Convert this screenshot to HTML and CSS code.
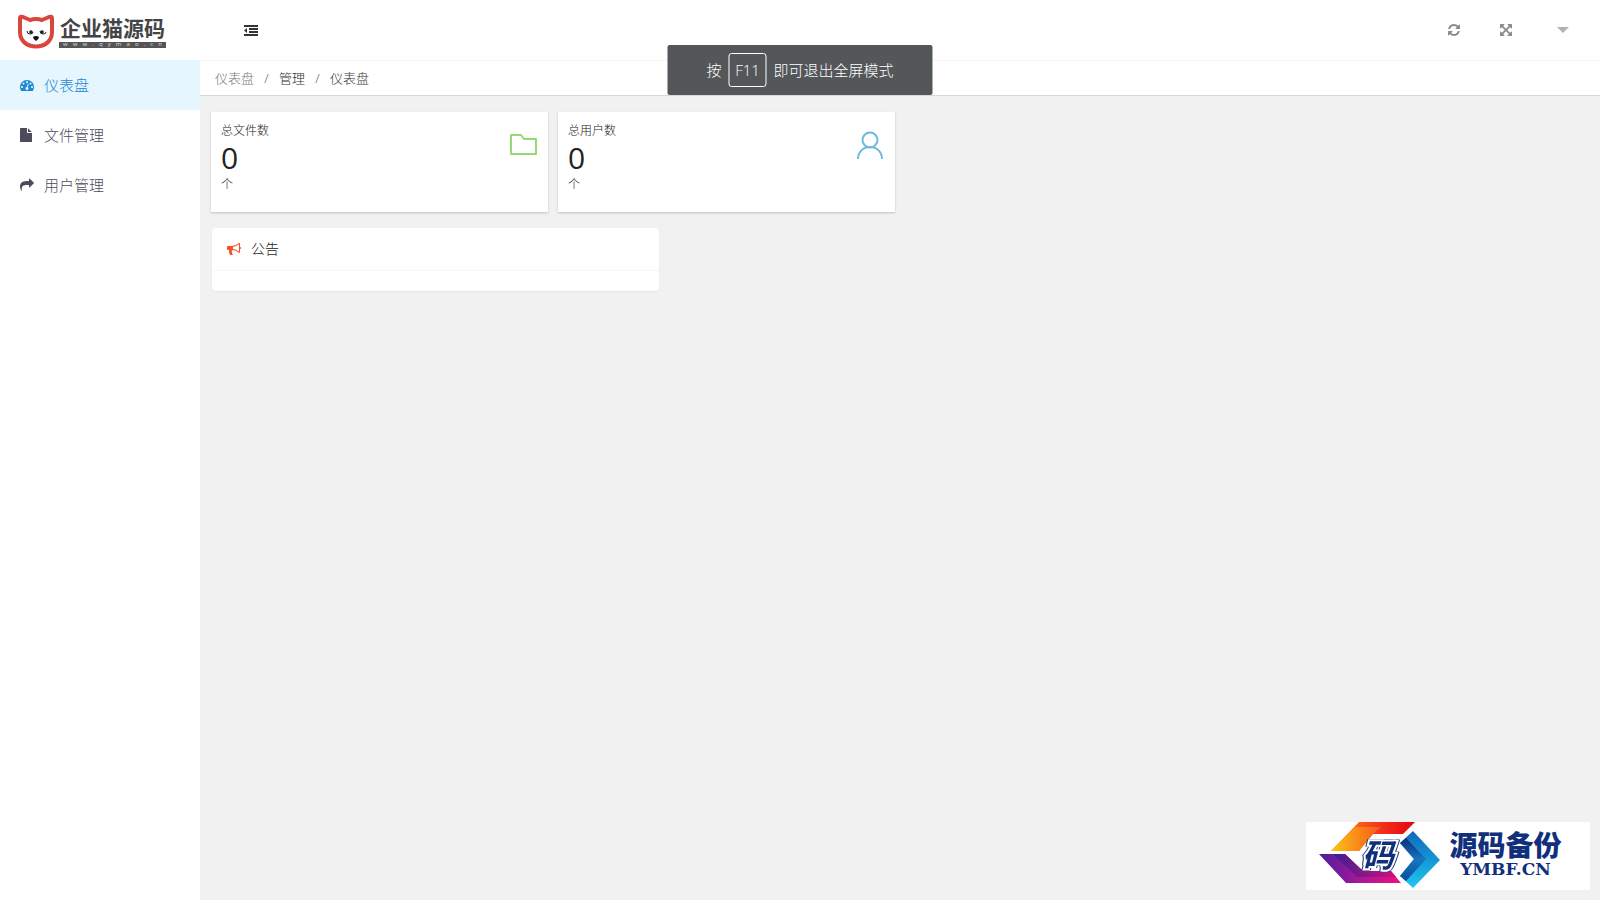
FILE: index.html
```html
<!DOCTYPE html>
<html lang="zh-CN">
<head>
    <meta charset="UTF-8">
    <title>仪表盘</title>
    <link rel="stylesheet" href="styles.css">
</head>
<body>
<header class="header">
    <a class="logo" href="#">
        <svg class="logo-cat" viewBox="0 0 38 36">
            <path d="M3 4Q3 2 6 3L13 6Q19 4 25 6L32 3Q35 2 35 4V18C35 27 28 32.500 19 32.500S3 27 3 18Z" fill="#fff" stroke="#d9463c" stroke-width="4" stroke-linejoin="round"/>
            <path d="M10 17q0 3 3 3t3-2M23 17q0 3 3 3t3-2" fill="none" stroke="#222" stroke-width="1"/>
            <circle cx="14" cy="18" r="1.800" fill="#222"/>
            <circle cx="25" cy="18" r="1.800" fill="#222"/>
            <path d="M16 23q3-2 6 0q0 2-3 4q-3-2-3-4z" fill="#111"/>
        </svg>
        <span class="logo-name">
            <b>企业猫源码</b>
            <small>w w w . q y m a o . c n</small>
        </span>
    </a>
    <button class="icon-btn fold" aria-label="收起菜单">
        <svg class="icon" viewBox="0 0 14 14"><path d="M0 2h14v2H0zM5 5h9v2H5zM5 8h9v2H5zM0 11h14v2H0zM3 5v5L0 7.500z"/></svg>
    </button>
    <div class="tools">
        <button class="icon-btn" aria-label="刷新">
            <svg class="icon" viewBox="0 0 1792 1792"><path d="M1639 1056q0 5-1 7-64 268-268 434.500t-478 166.500q-146 0-282.500-55t-243.500-157l-129 129q-19 19-45 19t-45-19-19-45v-448q0-26 19-45t45-19h448q26 0 45 19t19 45-19 45l-137 137q71 66 161 102t187 36q134 0 250-65t186-179q11-17 53-117 8-23 30-23h192q13 0 22.500 9.500t9.500 22.500zm25-800v448q0 26-19 45t-45 19h-448q-26 0-45-19t-19-45 19-45l138-138q-148-137-349-137-134 0-250 65t-186 179q-11 17-53 117-8 23-30 23h-199q-13 0-22.500-9.500t-9.500-22.500v-7q65-268 270-434.500t480-166.500q146 0 284 55.500t245 156.500l130-129q19-19 45-19t45 19 19 45z"/></svg>
        </button>
        <button class="icon-btn" aria-label="全屏">
            <svg class="icon" viewBox="0 0 1792 1792"><path d="M1411 541l-355 355 355 355 144-144q29-31 70-14 39 17 39 59v448q0 26-19 45t-45 19h-448q-42 0-59-40-17-39 14-69l144-144-355-355-355 355 144 144q31 30 14 69-17 40-59 40h-448q-26 0-45-19t-19-45v-448q0-42 40-59 39-17 69 14l144 144 355-355-355-355-144 144q-19 19-45 19-12 0-24-5-40-17-40-59v-448q0-26 19-45t45-19h448q42 0 59 40 17 39-14 69l-144 144 355 355 355-355-144-144q-31-30-14-69 17-40 59-40h448q26 0 45 19t19 45v448q0 42-39 59-13 5-25 5-26 0-45-19z"/></svg>
        </button>
        <button class="icon-btn caret" aria-label="用户菜单">
            <svg class="icon" viewBox="0 0 14 14"><path d="M1 4h12l-6 6z"/></svg>
        </button>
    </div>
</header>

<div class="body">
    <nav class="side">
        <a class="side-item active" href="#">
            <svg class="icon" viewBox="0 0 1792 1792"><path d="M384 1152q0-53-37.500-90.500t-90.500-37.500-90.500 37.500-37.500 90.500 37.500 90.500 90.500 37.500 90.500-37.500 37.500-90.500zm192-448q0-53-37.500-90.500t-90.500-37.500-90.500 37.500-37.500 90.500 37.500 90.500 90.500 37.500 90.500-37.500 37.500-90.500zm428 481l101-382q6-26-7.500-48.500t-38.500-29.500-48 6.500-30 39.500l-101 382q-60 5-107 43.500t-63 98.500q-20 77 20 146t117 89 146-20 89-117q16-60-6-117t-72-91zm660-33q0-53-37.500-90.500t-90.500-37.500-90.500 37.500-37.500 90.500 37.500 90.500 90.500 37.500 90.500-37.500 37.500-90.500zm-640-640q0-53-37.500-90.500t-90.500-37.500-90.500 37.500-37.500 90.500 37.500 90.500 90.500 37.500 90.500-37.500 37.500-90.500zm448 192q0-53-37.500-90.500t-90.500-37.500-90.500 37.500-37.500 90.500 37.500 90.500 90.500 37.500 90.500-37.500 37.500-90.500zm320 448q0 261-141 483-19 29-54 29h-1402q-35 0-54-29-141-221-141-483 0-182 71-348t191-286 286-191 348-71 348 71 286 191 191 286 71 348z"/></svg>
            <span>仪表盘</span>
        </a>
        <a class="side-item" href="#">
            <svg class="icon" viewBox="128 0 1792 1792"><path d="M1152 512v-472q22 14 36 28l408 408q14 14 28 36h-472zm-128 32q0 40 28 68t68 28h544v1056q0 40-28 68t-68 28h-1344q-40 0-68-28t-28-68v-1600q0-40 28-68t68-28h800v544z"/></svg>
            <span>文件管理</span>
        </a>
        <a class="side-item" href="#">
            <svg class="icon" viewBox="0 0 1792 1792"><path d="M1792 640q0 26-19 45l-512 512q-19 19-45 19t-45-19-19-45v-256h-224q-98 0-175.500 6t-154 21.500-133 42.500-105.500 69.500-80 101-48.500 138.500-17.500 181q0 55 5 123 0 6 2.500 23.500t2.500 26.500q0 15-8.500 25t-23.500 10q-16 0-28-17-7-9-13-22t-13.500-30-10.500-24q-127-285-127-451 0-199 53-333 162-403 875-403h224v-256q0-26 19-45t45-19 45 19l512 512q19 19 19 45z"/></svg>
            <span>用户管理</span>
        </a>
    </nav>

    <main class="main">
        <div class="crumb">
            <a class="first" href="#">仪表盘</a><i>/</i><a href="#">管理</a><i>/</i><span>仪表盘</span>
        </div>
        <div class="cards">
            <div class="card">
                <div>
                    <p class="card-title">总文件数</p>
                    <p class="card-num">0</p>
                    <p class="card-unit">个</p>
                </div>
                <svg class="card-icon" viewBox="0 0 28 28" fill="none" stroke="#94d973" stroke-width="2" stroke-linejoin="round"><path d="M1 4h10l3 4h12v15H1z"/></svg>
            </div>
            <div class="card">
                <div>
                    <p class="card-title">总用户数</p>
                    <p class="card-num">0</p>
                    <p class="card-unit">个</p>
                </div>
                <svg class="card-icon" viewBox="0 0 28 28" fill="none" stroke="#6db9e3" stroke-width="2"><circle cx="13" cy="9" r="7.500"/><path d="M1 28c0-7 5-12 12-12s12 5 12 12"/></svg>
            </div>
        </div>
        <div class="panels">
            <section class="panel">
                <h2 class="panel-head">
                    <svg class="icon" viewBox="0 0 1792 1792"><path d="M1664 640q53 0 90.500 37.500t37.500 90.500-37.500 90.500-90.500 37.500v384q0 52-38 90t-90 38q-417-347-812-380-58 19-91 66t-31 100.500 40 92.500q-20 33-23 65.500t6 58 33.500 55 48 50 61.500 50.500q-29 58-111.500 83t-168.500 11.500-132-55.500q-7-23-29.500-87.500t-32-94.500-23-89-15-101 3.500-98.500 22-110.500h-122q-66 0-113-47t-47-113v-192q0-66 47-113t113-47h480q435 0 896-384 52 0 90 38t38 90v384zm-128 604v-954q-394 302-768 343v270q377 42 768 341z"/></svg>
                    <span>公告</span>
                </h2>
                <div class="panel-body"></div>
            </section>
        </div>
    </main>
</div>

<div class="toast">按<kbd>F11</kbd>即可退出全屏模式</div>

<div class="mark">
    <svg class="mark-logo" viewBox="0 0 124 68">
        <defs>
            <linearGradient id="warm"><stop offset="0" stop-color="#ff9a10"/><stop offset=".5" stop-color="#f4401c"/><stop offset="1" stop-color="#e60012"/></linearGradient>
            <linearGradient id="warm2"><stop offset="0" stop-color="#ffc414"/><stop offset="1" stop-color="#f4581e"/></linearGradient>
            <linearGradient id="plum"><stop offset="0" stop-color="#4a1f9c"/><stop offset=".5" stop-color="#a8189a"/><stop offset="1" stop-color="#f0107c"/></linearGradient>
            <linearGradient id="plum2"><stop offset="0" stop-color="#3c1f90"/><stop offset="1" stop-color="#d0107c"/></linearGradient>
            <linearGradient id="sea" x2="0" y2="1"><stop offset="0" stop-color="#1268b8"/><stop offset=".5" stop-color="#1496d6"/><stop offset="1" stop-color="#20c8f0"/></linearGradient>
            <linearGradient id="sea2" x2="0" y2="1"><stop offset="0" stop-color="#0c2c7c"/><stop offset=".5" stop-color="#1676c0"/><stop offset="1" stop-color="#0c4c9c"/></linearGradient>
        </defs>
        <path d="M12 29L40 0H96L84 12H54L40 29Z" fill="url(#warm)"/>
        <path d="M12 29L36 5H62L54 12L40 29Z" fill="url(#warm2)"/>
        <path d="M0 32H26L44 49H72L82 61H27Z" fill="url(#plum)"/>
        <path d="M14 32H26L44 49H72L77 55H38Z" fill="url(#plum2)"/>
        <path d="M94 9L121 38L94 66L81 54L95 37L81 21Z" fill="url(#sea)"/>
        <path d="M81 21L87 16L107 37L87 59L81 54L95 37Z" fill="url(#sea2)"/>
        <text class="mark-char" x="43" y="45">码</text>
    </svg>
    <div class="mark-name">
        <b>源码备份</b>
        <span>YMBF.CN</span>
    </div>
</div>
</body>
</html>
```
FILE: styles.css
```css
*{
    margin: 0;
    padding: 0;
    box-sizing: border-box;
}
body{
    min-height: 100vh;
    display: flex;
    flex-direction: column;
    background: #f1f1f1;
    color: #222;
    font: 300 14px/20px "Open Sans", "Noto Sans CJK SC", sans-serif;
}
a{
    color: inherit;
    text-decoration: none;
}
.icon{
    display: block;
    width: 14px;
    height: 14px;
    fill: currentColor;
}
.icon-btn{
    width: 52px;
    height: 60px;
    display: flex;
    align-items: center;
    justify-content: center;
    border: 0;
    background: none;
    color: #8c8c8c;
    cursor: pointer;
}

/* header */
.header{
    height: 61px;
    display: flex;
    background: #fff;
    border-bottom: 1px solid #f6f6f6;
}
.logo{
    width: 200px;
    padding: 14px 0 0 17px;
    display: flex;
    gap: 4px;
}
.logo-cat{
    width: 38px;
    height: 36px;
}
.logo-name{
    width: 107px;
    color: #444;
}
.logo-name b{
    display: block;
    padding-left: 1px;
    font-size: 21px;
    font-weight: 700;
    line-height: 28px;
}
.logo-name small{
    display: block;
    height: 6px;
    padding: 0 4px;
    background: #555;
    color: #ddd;
    font-size: 6px;
    font-weight: 400;
    line-height: 5px;
    text-align-last: justify;
}
.fold{
    margin-left: 25px;
    color: #333;
}
.tools{
    margin-left: auto;
    padding-right: 11px;
    display: flex;
}
.caret{
    margin-left: 5px;
    color: #b2b2b2;
}

/* side menu */
.body{
    flex: 1;
    display: flex;
}
.side{
    width: 200px;
    margin-top: -1px;
    background: #fff;
}
.side-item{
    height: 50px;
    padding-left: 20px;
    display: flex;
    align-items: center;
    gap: 10px;
    color: #4c4c5a;
    font-size: 15px;
}
.side-item.active{
    background: #e5f6fe;
    color: #1e88d2;
}

/* content */
.main{
    flex: 1;
}
.crumb{
    height: 35px;
    padding-left: 15px;
    display: flex;
    align-items: center;
    background: #fff;
    border-bottom: 1px solid #d8d8d8;
    color: #333;
    font-size: 13px;
}
.crumb .first{
    color: #777;
}
.crumb i{
    width: 25px;
    color: #555;
    font-style: normal;
    text-align: center;
}
.cards{
    padding: 16px 11px;
    display: grid;
    grid-template-columns: repeat(4, 1fr);
    gap: 10px;
}
.card{
    height: 100px;
    padding: 9px 10px;
    display: flex;
    justify-content: space-between;
    background: #fff;
    box-shadow: 0 1px 2px rgba(0, 0, 0, .2);
}
.card-title,
.card-unit{
    font-size: 12px;
    line-height: 20px;
}
.card-num{
    font-size: 30px;
    font-weight: 400;
    line-height: 34px;
}
.card-icon{
    width: 28px;
    height: 28px;
    margin-top: 10px;
}
.panels{
    padding: 0 12px;
    display: grid;
    grid-template-columns: repeat(3, 1fr);
    gap: 18px;
}
.panel{
    background: #fff;
    border-radius: 4px;
    box-shadow: 0 1px 2px rgba(0, 0, 0, .06);
}
.panel-head{
    height: 43px;
    padding-left: 15px;
    display: flex;
    align-items: center;
    gap: 10px;
    border-bottom: 1px solid #f6f6f6;
    font-size: 14px;
    font-weight: 300;
}
.panel-head .icon{
    color: #f4511e;
}
.panel-body{
    padding: 10px;
}

/* fullscreen tip */
.toast{
    position: absolute;
    top: 45px;
    left: 50%;
    transform: translateX(-50%);
    height: 50px;
    padding: 0 39px;
    display: flex;
    align-items: center;
    border-radius: 2px;
    background: #54575a;
    color: #fff;
    font-size: 15px;
    white-space: nowrap;
}
.toast kbd{
    width: 38px;
    margin: 0 7px;
    border: 1px solid #fff;
    border-radius: 3px;
    font: inherit;
    line-height: 32px;
    text-align: center;
}

/* corner mark */
.mark{
    position: fixed;
    right: 10px;
    bottom: 10px;
    width: 284px;
    height: 68px;
    padding-left: 13px;
    display: flex;
    background: #fff;
}
.mark-logo{
    width: 124px;
    height: 68px;
}
.mark-char{
    fill: #10307c;
    stroke: #fff;
    stroke-width: 4px;
    paint-order: stroke;
    font-size: 32px;
    font-style: italic;
    font-weight: 700;
    filter: drop-shadow(1px 0 0 #10307c) drop-shadow(-1px 0 0 #10307c);
}
.mark-name{
    flex: 1;
    padding: 9px 22px 0 0;
    text-align: center;
    color: #10307c;
}
.mark-name b{
    display: block;
    font-size: 28px;
    font-weight: 900;
    line-height: 28px;
}
.mark-name span{
    display: block;
    font: bold 17px/20px "DejaVu Serif", serif;
}
```
